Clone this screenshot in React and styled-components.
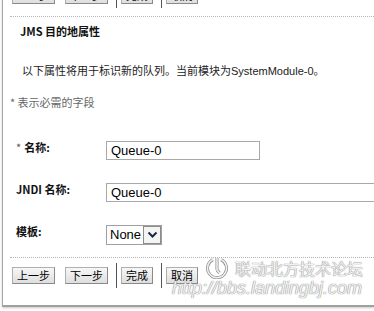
import React from "react";
import styled, { createGlobalStyle } from "styled-components";

const Global = createGlobalStyle`
  html, body { margin: 0; padding: 0; background: #fff; }
  body { font-family: "Noto Sans CJK SC", "Noto Sans", sans-serif; font-size: 11px; color: #000; }
`;

const Viewport = styled.div`
  width: 374px;
  height: 311px;
  overflow: hidden;
`;

const Panel = styled.div`
  position: relative;
  box-sizing: border-box;
  margin: -17px 0 0 2px;
  height: 324px;
  padding-left: 7px;
  border-left: 1px solid #a9a9a9;
  border-bottom: 2px solid #a0a0a0;
  box-shadow: 0 1px 2px #c8c8c8;
`;

const Toolbar = styled.div`
  display: flex;
  align-items: center;
  height: 25px;
  margin: ${(p) => p.$top || 0}px 0 0 2px;
`;

const Btn = styled.button`
  box-sizing: border-box;
  height: 17px;
  padding: 0 4px;
  margin-right: ${(p) => p.$mr || 0}px;
  font-family: "Noto Sans CJK SC", sans-serif;
  font-size: 11px;
  line-height: 15px;
  color: #000;
  background: linear-gradient(#f7f7f7, #dedede);
  border: 1px solid #b0b0b0;
  border-right-color: #8a8a8a;
  border-bottom-color: #8a8a8a;
  border-radius: 0;
  cursor: pointer;
`;

const Sep = styled.span`
  width: 1px;
  height: 25px;
  background: #555;
  margin: 0 4px 0 8px;
`;

const Dotted = styled.div`
  border-top: 1px dotted #b5b5b5;
  margin-top: ${(p) => p.$top}px;
`;

const Title = styled.h2`
  margin: 7px 0 0 10px;
  font-size: 11px;
  line-height: 14px;
  font-weight: bold;
  color: #111;
`;

const Desc = styled.p`
  margin: 25px 0 0 12px;
  font-size: 11px;
  line-height: 14px;
  color: #222;
  white-space: nowrap;
`;

const Latin = styled.span`
  font-family: "Liberation Sans", Arial, sans-serif;
  font-size: 11px;
`;

const Note = styled.p`
  margin: 17px 0 0 0;
  font-size: 11px;
  line-height: 14px;
  color: #666;
`;

const Form = styled.div`
  display: flex;
  flex-direction: column;
  gap: 21px;
  margin: 31px 0 0 6px;
`;

const Row = styled.div`
  display: flex;
  align-items: center;
`;

const Label = styled.label`
  flex: 0 0 90px;
  white-space: nowrap;
  padding-bottom: 7px;
  font-size: 11px;
  line-height: 14px;
  font-weight: bold;
  color: #111;
`;

const Star = styled.span`
  font-weight: normal;
  color: #555;
  margin-right: 3px;
`;

const TextInput = styled.input`
  box-sizing: border-box;
  flex: 0 0 auto;
  width: ${(p) => p.$w}px;
  height: 19px;
  padding: 0 4px;
  border: 1px solid #a8a8a8;
  font-family: "Liberation Sans", Arial, sans-serif;
  font-size: 13px;
  color: #000;
  outline: none;
`;

const SelectBox = styled.div`
  display: flex;
  box-sizing: border-box;
  height: 20px;
  border: 1px solid #a0a0a0;
`;

const Select = styled.select`
  appearance: none;
  -webkit-appearance: none;
  border: none;
  background: #fff;
  width: 36px;
  padding: 0 0 0 3px;
  font-family: "Liberation Sans", Arial, sans-serif;
  font-size: 13px;
  color: #000;
  outline: none;
`;

const Arrow = styled.span`
  display: flex;
  align-items: center;
  justify-content: center;
  width: 18px;
  background: #f4f4f4;
  border: 1px solid #8c8c8c;
  box-sizing: border-box;
`;

const Watermark = styled.div`
  position: absolute;
  left: 169px;
  top: 275px;
  pointer-events: none;
`;

const MarkRow = styled.div`
  display: flex;
  align-items: center;
  gap: 6px;
  padding-left: 33px;
  height: 20px;
`;

const MarkText = styled.span`
  font-family: "Noto Sans CJK SC", sans-serif;
  font-size: 16px;
  line-height: 20px;
  color: #f0f0f0;
  text-shadow: 0 0 1px #888, 0 0 1px #888;
`;

const MarkUrl = styled.div`
  font-family: "Liberation Sans", Arial, sans-serif;
  font-style: italic;
  font-size: 18px;
  line-height: 20px;
  color: #f0f0f0;
  text-shadow: 0 0 1px #888, 0 0 1px #888;
`;

function Buttons({ top }) {
  return (
    <Toolbar $top={top}>
      <Btn $mr={10}>上一步</Btn>
      <Btn>下一步</Btn>
      <Sep />
      <Btn>完成</Btn>
      <Sep />
      <Btn>取消</Btn>
    </Toolbar>
  );
}

export default function App() {
  return (
    <>
      <Global />
      <Viewport>
        <Panel>
          <Buttons top={0} />
          <Dotted $top={8} />
          <Title>JMS 目的地属性</Title>
          <Desc>
            以下属性将用于标识新的队列。当前模块为<Latin>SystemModule-0</Latin>。
          </Desc>
          <Note>* 表示必需的字段</Note>
          <Form>
            <Row>
              <Label><Star>*</Star>名称:</Label>
              <TextInput $w={154} defaultValue="Queue-0" />
            </Row>
            <Row>
              <Label>JNDI 名称:</Label>
              <TextInput $w={300} defaultValue="Queue-0" />
            </Row>
            <Row>
              <Label>模板:</Label>
              <SelectBox>
                <Select defaultValue="None">
                  <option>None</option>
                </Select>
                <Arrow>
                  <svg width="11" height="8" viewBox="0 0 11 8">
                    <path d="M1.5 1.5 L5.5 5.5 L9.5 1.5" fill="none" stroke="#1a2a40" strokeWidth="2" />
                  </svg>
                </Arrow>
              </SelectBox>
            </Row>
          </Form>
          <Dotted $top={12} />
          <Buttons top={5} />
          <Watermark>
            <MarkRow>
              <svg width="24" height="22" viewBox="0 0 24 22">
                <path d="M8 2.6 A9.5 9.5 0 1 0 16 2.6" fill="none" stroke="#8a8a8a" strokeWidth="3" />
                <path d="M8 2.6 A9.5 9.5 0 1 0 16 2.6" fill="none" stroke="#f0f0f0" strokeWidth="1.6" />
                <path d="M12 1 L12 13 M12 13 L14.5 16" fill="none" stroke="#8a8a8a" strokeWidth="3" />
                <path d="M12 1 L12 13 M12 13 L14.5 16" fill="none" stroke="#f0f0f0" strokeWidth="1.6" />
              </svg>
              <MarkText>联动北方技术论坛</MarkText>
            </MarkRow>
            <MarkUrl>http://bbs.landingbj.com</MarkUrl>
          </Watermark>
        </Panel>
      </Viewport>
    </>
  );
}
